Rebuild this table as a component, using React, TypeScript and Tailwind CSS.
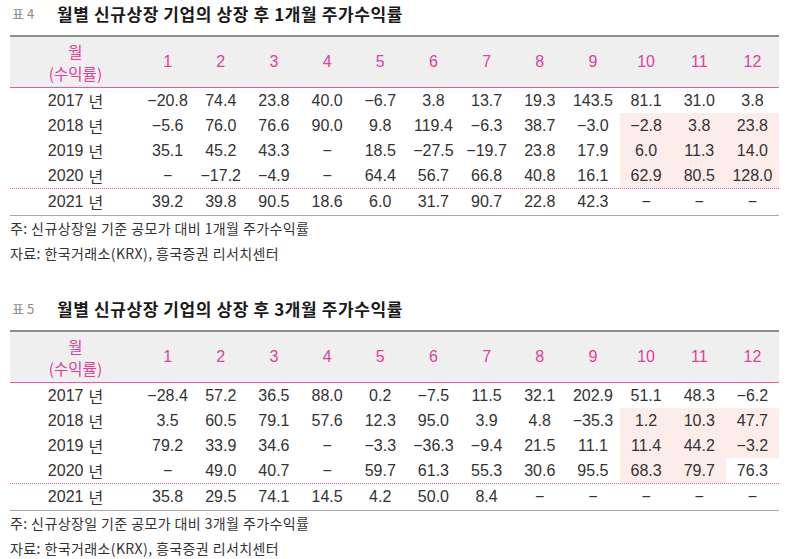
const MONTHS = ["1", "2", "3", "4", "5", "6", "7", "8", "9", "10", "11", "12"];

type Row = { year: string; values: string[]; hi: number[] };

const table4: Row[] = [
  { year: "2017", values: ["−20.8", "74.4", "23.8", "40.0", "−6.7", "3.8", "13.7", "19.3", "143.5", "81.1", "31.0", "3.8"], hi: [] },
  { year: "2018", values: ["−5.6", "76.0", "76.6", "90.0", "9.8", "119.4", "−6.3", "38.7", "−3.0", "−2.8", "3.8", "23.8"], hi: [9, 10, 11] },
  { year: "2019", values: ["35.1", "45.2", "43.3", "−", "18.5", "−27.5", "−19.7", "23.8", "17.9", "6.0", "11.3", "14.0"], hi: [9, 10, 11] },
  { year: "2020", values: ["−", "−17.2", "−4.9", "−", "64.4", "56.7", "66.8", "40.8", "16.1", "62.9", "80.5", "128.0"], hi: [9, 10, 11] },
];
const total4: Row = { year: "2021", values: ["39.2", "39.8", "90.5", "18.6", "6.0", "31.7", "90.7", "22.8", "42.3", "−", "−", "−"], hi: [] };

const table5: Row[] = [
  { year: "2017", values: ["−28.4", "57.2", "36.5", "88.0", "0.2", "−7.5", "11.5", "32.1", "202.9", "51.1", "48.3", "−6.2"], hi: [] },
  { year: "2018", values: ["3.5", "60.5", "79.1", "57.6", "12.3", "95.0", "3.9", "4.8", "−35.3", "1.2", "10.3", "47.7"], hi: [9, 10, 11] },
  { year: "2019", values: ["79.2", "33.9", "34.6", "−", "−3.3", "−36.3", "−9.4", "21.5", "11.1", "11.4", "44.2", "−3.2"], hi: [9, 10, 11] },
  { year: "2020", values: ["−", "49.0", "40.7", "−", "59.7", "61.3", "55.3", "30.6", "95.5", "68.3", "79.7", "76.3"], hi: [9, 10] },
];
const total5: Row = { year: "2021", values: ["35.8", "29.5", "74.1", "14.5", "4.2", "50.0", "8.4", "−", "−", "−", "−", "−"], hi: [] };

const grid = "grid grid-cols-[131px_repeat(12,minmax(0,1fr))]";

function DataRow({ row, h }: { row: Row; h: string }) {
  return (
    <div className={`${grid} ${h}`}>
      <div className="flex items-center justify-center">
        {row.year} <span className="ml-[5px] font-['Noto_Sans_CJK_KR']">년</span>
      </div>
      {row.values.map((v, i) => (
        <div
          key={i}
          className={`flex items-center justify-center ${row.hi.includes(i) ? "bg-[#fcecea]" : ""}`}
        >
          {v}
        </div>
      ))}
    </div>
  );
}

function Table({ num, period, rows, total }: { num: string; period: string; rows: Row[]; total: Row }) {
  return (
    <section>
      <div className="flex h-[28px] items-center">
        <span className="ml-[2px] w-[45px] text-[13px] text-[#8a8a8a]">표 {num}</span>
        <h2 className="text-[17px] font-bold tracking-[0.6px] text-[#1a1a1a]">
          월별 신규상장 기업의 상장 후 {period}개월 주가수익률
        </h2>
      </div>
      <div className="mt-[7px] font-['Liberation_Sans','Noto_Sans_CJK_KR',sans-serif] text-[16px] text-[#333]">
        <div className={`${grid} h-[53px] border-t-2 border-b border-t-[#8c8c8c] border-b-[#e45aa5] border-b-dotted bg-[#efefef] text-[#e0409a]`}>
          <div className="flex flex-col items-center justify-center font-['Noto_Sans_CJK_KR'] text-[15.5px] leading-[22px]">
            <span>월</span>
            <span>(수익률)</span>
          </div>
          {MONTHS.map((m) => (
            <div key={m} className="flex items-center justify-center">
              {m}
            </div>
          ))}
        </div>
        {rows.map((r) => (
          <DataRow key={r.year} row={r} h="h-[25px]" />
        ))}
        <div className="border-t border-dotted border-[#e45aa5]" />
        <div className="border-b-[1.5px] border-[#a8a8a8]">
          <DataRow row={total} h="h-[26px]" />
        </div>
      </div>
      <div className="font-['Noto_Sans_CJK_KR',sans-serif] text-[14px] tracking-[0.4px] text-[#333]">
        <p className="flex h-[25px] items-center">주: 신규상장일 기준 공모가 대비 {period}개월 주가수익률</p>
        <p className="flex h-[25px] items-center">자료: 한국거래소(KRX), 흥국증권 리서치센터</p>
      </div>
    </section>
  );
}

export default function App() {
  return (
    <div className="h-[559px] w-[794px] bg-white pl-[10px] pr-[15px] font-['Noto_Sans_CJK_KR',sans-serif]">
      <Table num="4" period="1" rows={table4} total={total4} />
      <div className="h-[29px]" />
      <Table num="5" period="3" rows={table5} total={total5} />
    </div>
  );
}
